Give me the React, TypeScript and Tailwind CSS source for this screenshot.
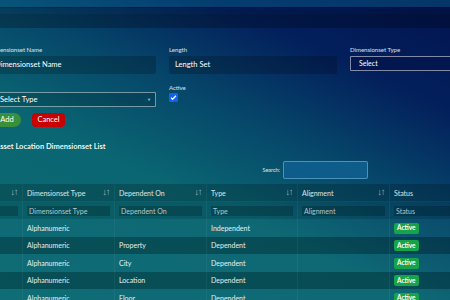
import React from "react";

const font = { fontFamily: "Lato, 'Open Sans', sans-serif" };

const rows = [
  { type: "Alphanumeric", dep: "", kind: "Independent" },
  { type: "Alphanumeric", dep: "Property", kind: "Dependent" },
  { type: "Alphanumeric", dep: "City", kind: "Dependent" },
  { type: "Alphanumeric", dep: "Location", kind: "Dependent" },
  { type: "Alphanumeric", dep: "Floor", kind: "Dependent" },
];

const cols = ["Dimensionset Name", "Dimensionset Type", "Dependent On", "Type", "Alignment", "Status"];

function SortIcon() {
  return (
    <svg width="7" height="7" viewBox="0 0 8 8" className="text-white/40">
      <path d="M2 1v6M0.8 5.6L2 7l1.2-1.4M6 7V1M4.8 2.4L6 1l1.2 1.4" stroke="currentColor" strokeWidth="0.8" fill="none" />
    </svg>
  );
}

function App() {
  return (
    <div
      style={font}
      className="w-[450px] h-[300px] overflow-hidden text-white bg-[linear-gradient(205deg,#021450_0%,#03205c_22%,#06476a_42%,#0a6672_62%,#0a6b74_100%)]"
    >
      {/* Top bars */}
      <div className="h-[7px] bg-[#0a6a90]/40" />
      <div className="h-[7px] bg-black/15 border-t border-black/20" />
      <div className="h-[14px] bg-black/25" />

      {/* Form */}
      <div className="-ml-[11px] w-[560px] pt-[17px]">
        <div className="grid grid-cols-[167px_168px_167px] gap-x-[13px]">
          <div>
            <div className="text-[6px] text-white/85 h-[9px] leading-[9px]">Dimensionset Name</div>
            <div className="h-[18px] mt-[2px] rounded-[2px] bg-black/20 px-[6px] flex items-center text-[7.5px]">Dimensionset Name</div>
          </div>
          <div>
            <div className="text-[6px] text-white/85 h-[9px] leading-[9px]">Length</div>
            <div className="h-[18px] mt-[2px] rounded-[2px] bg-black/20 px-[6px] flex items-center text-[7.5px]">Length Set</div>
          </div>
          <div>
            <div className="text-[6px] text-white/85 h-[9px] leading-[9px]">Dimensionset Type</div>
            <div className="h-[15px] mt-[2px] rounded-[1px] border border-white/50 bg-[#021650] px-[8px] flex items-center text-[7px]">Select</div>
          </div>

          <div className="pt-[18px]">
            <div className="h-[15px] rounded-[1px] border border-white/45 bg-black/15 pl-[10px] pr-[4px] flex items-center justify-between text-[7.5px]">
              <span>Select Type</span>
              <span className="text-[4px] text-white/70">▼</span>
            </div>
          </div>
          <div className="pt-[9px]">
            <div className="text-[6px] text-white/85 h-[9px] leading-[9px]">Active</div>
            <div className="w-[9px] h-[9px] mt-[1px] rounded-[1px] bg-[#1160ee] flex items-center justify-center">
              <svg width="7" height="7" viewBox="0 0 8 8">
                <path d="M1.2 4.2l1.8 1.8L6.8 2" stroke="white" strokeWidth="1.4" fill="none" />
              </svg>
            </div>
          </div>
          <div />
        </div>

        <div className="flex gap-[11px] mt-[6px]">
          <button className="h-[14px] w-[32px] rounded-[7px] bg-[#3a8f3a] text-[7.5px] pl-[4px]">Add</button>
          <button className="h-[14px] w-[33px] rounded-[4px] bg-[#c80000] text-[7.5px]">Cancel</button>
        </div>

        <div className="pl-[6px] mt-[14px] text-[7.5px] font-bold text-white/95">Asset Location Dimensionset List</div>
      </div>

      {/* Search */}
      <div className="flex justify-end items-center gap-[3px] pr-[82px] mt-[9px]">
        <span className="text-[5.5px] text-white/85">Search:</span>
        <div className="w-[85px] h-[18px] rounded-[2px] border border-[#5aa0c8]/80 bg-[#0e5c8a]" />
      </div>

      {/* Table */}
      <div className="-ml-[69px] w-[600px] mt-[5px] text-[7px]">
        <div className="grid grid-cols-[92px_92px_92px_91px_92px_92px] h-[18px] bg-black/20 border-b border-white/5">
          {cols.map((h, i) => (
            <div key={h} className="flex items-center justify-between px-[4px] border-r border-white/5">
              <span className="text-white/85">{h}</span>
              {i < 5 && <SortIcon />}
            </div>
          ))}
        </div>
        <div className="grid grid-cols-[92px_92px_92px_91px_92px_92px] h-[17px] bg-black/10">
          {cols.map((h) => (
            <div key={h} className="flex items-center px-[4px] border-r border-white/5">
              <div className="w-full h-[10px] bg-black/20 flex items-center px-[2px] text-white/70">{h}</div>
            </div>
          ))}
        </div>
        {rows.map((r, i) => (
          <div
            key={i}
            className={`grid grid-cols-[92px_92px_92px_91px_92px_92px] h-[17.5px] text-white/90 ${i % 2 === 1 ? "bg-black/25" : "bg-white/[0.02]"}`}
          >
            <div className="border-r border-white/5" />
            <div className="flex items-center px-[4px] border-r border-white/5">{r.type}</div>
            <div className="flex items-center px-[4px] border-r border-white/5">{r.dep}</div>
            <div className="flex items-center px-[4px] border-r border-white/5">{r.kind}</div>
            <div className="border-r border-white/5" />
            <div className="flex items-center px-[4px]">
              <span className="h-[11px] px-[3px] rounded-[2px] bg-[#16a34a] text-[6.5px] font-bold text-white flex items-center">Active</span>
            </div>
          </div>
        ))}
      </div>
    </div>
  );
}

export default App;
